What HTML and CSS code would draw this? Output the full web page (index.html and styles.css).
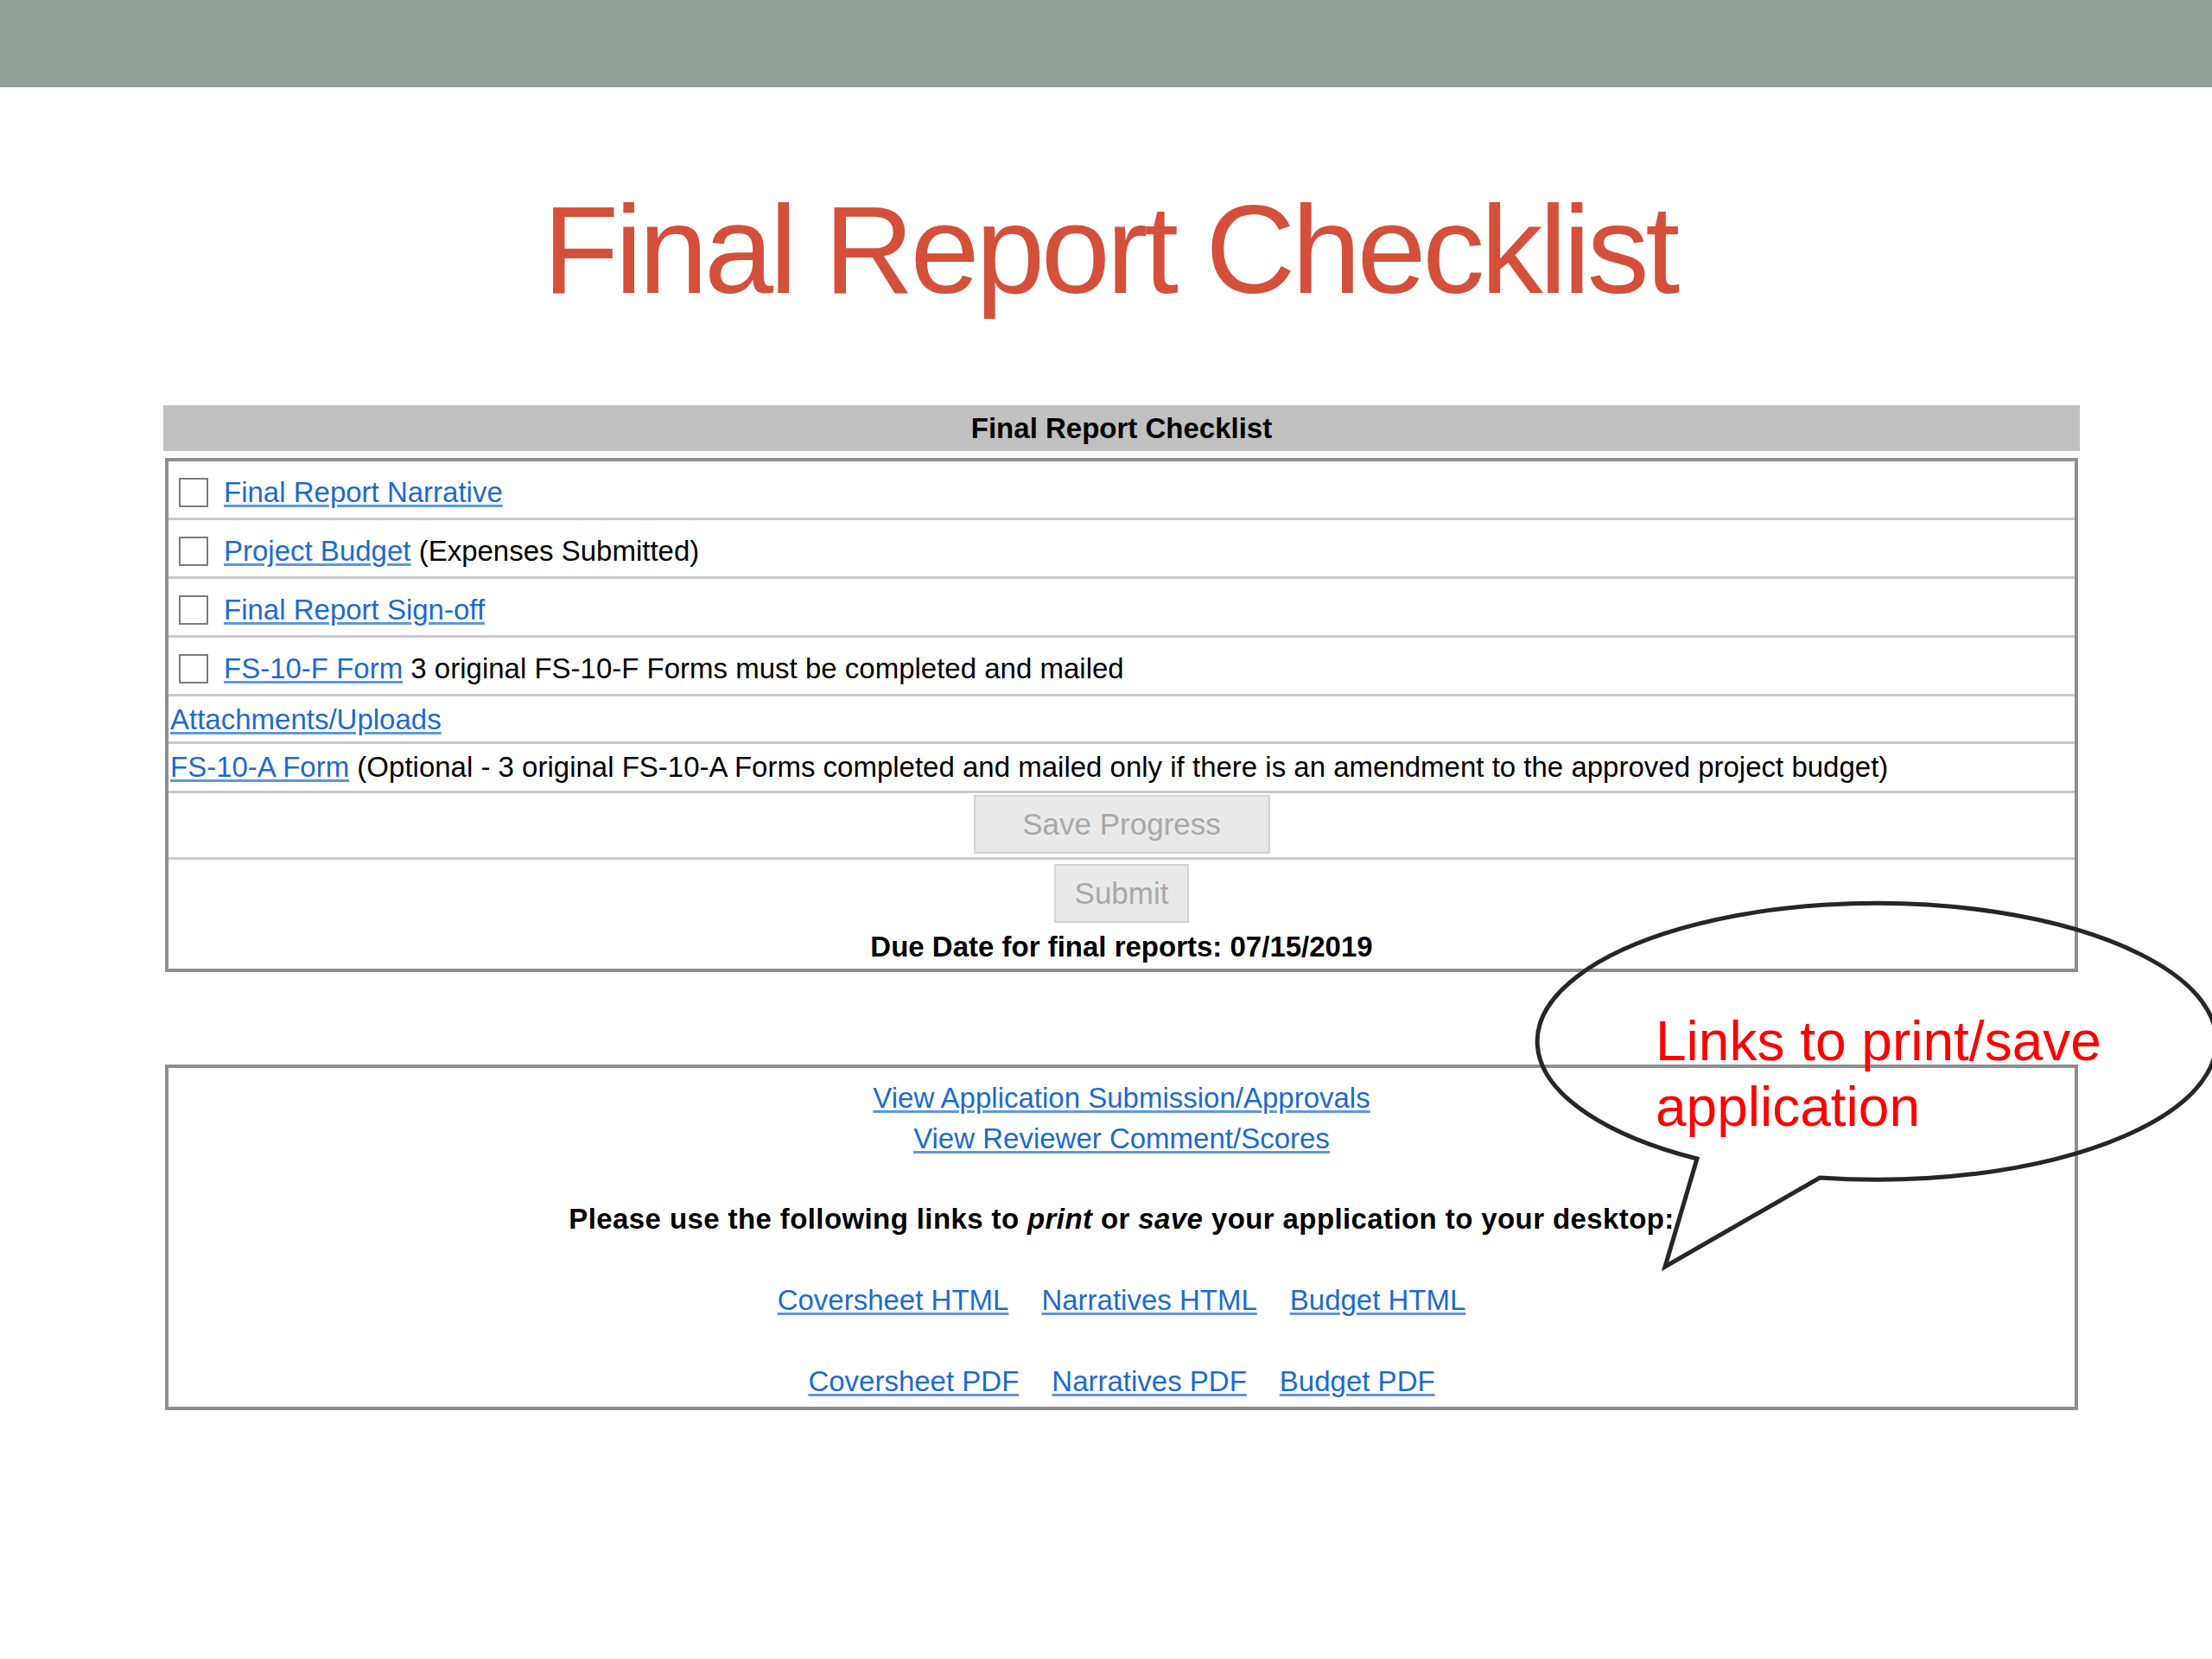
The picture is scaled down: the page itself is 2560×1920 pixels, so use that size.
FILE: index.html
```html
<!DOCTYPE html>
<html lang="en">
<head>
    <meta charset="UTF-8">
    <title>Final Report Checklist</title>
    <link rel="stylesheet" href="styles.css">
</head>
<body>
    <div class="slide">
        <div class="topbar"></div>
        <h1 class="title">Final Report Checklist</h1>

        <div class="panel">
            <div class="panel-head">Final Report Checklist</div>
            <div class="box checklist">
                <div class="row check-row">
                    <input type="checkbox" class="check">
                    <a href="#">Final Report Narrative</a>
                </div>
                <div class="row check-row">
                    <input type="checkbox" class="check">
                    <span><a href="#">Project Budget</a> (Expenses Submitted)</span>
                </div>
                <div class="row check-row">
                    <input type="checkbox" class="check">
                    <a href="#">Final Report Sign-off</a>
                </div>
                <div class="row check-row">
                    <input type="checkbox" class="check">
                    <span><a href="#">FS-10-F Form</a> 3 original FS-10-F Forms must be completed and mailed</span>
                </div>
                <div class="row plain-row row-attach">
                    <a href="#">Attachments/Uploads</a>
                </div>
                <div class="row plain-row row-optional">
                    <span><a href="#">FS-10-A Form</a> (Optional - 3 original FS-10-A Forms completed and mailed only if there is an amendment to the approved project budget)</span>
                </div>
                <div class="row button-row">
                    <button class="btn btn-save" disabled>Save Progress</button>
                </div>
                <div class="row submit-row">
                    <button class="btn btn-submit" disabled>Submit</button>
                    <div class="due">Due Date for final reports: 07/15/2019</div>
                </div>
            </div>

            <div class="box downloads">
                <div class="view-links">
                    <a href="#">View Application Submission/Approvals</a>
                    <a href="#">View Reviewer Comment/Scores</a>
                </div>
                <p class="note">Please use the following links to <i>print</i> or <i>save</i> your application to your desktop:</p>
                <div class="file-links">
                    <a href="#">Coversheet HTML</a>
                    <a href="#">Narratives HTML</a>
                    <a href="#">Budget HTML</a>
                </div>
                <div class="file-links">
                    <a href="#">Coversheet PDF</a>
                    <a href="#">Narratives PDF</a>
                    <a href="#">Budget PDF</a>
                </div>
            </div>
        </div>

        <svg class="bubble" width="800" height="450" viewBox="0 0 800 450">
            <path d="M204 311 L167 436 L346 333 A393 160 0 1 0 204 311 Z" fill="none" stroke="#262626" stroke-width="5" stroke-linejoin="miter"/>
        </svg>
        <div class="callout">Links to print/save<br>application</div>
    </div>
</body>
</html>
```

FILE: styles.css
```css
body {
    margin: 0;
    background: #FFFFFF;
    font-family: "Liberation Sans", Arial, sans-serif;
    color: #000;
}
.slide {
    position: relative;
    width: 2560px;
    height: 1920px;
    overflow: hidden;
}
.topbar {
    height: 101px;
    background: #939F98;
}
.title {
    margin: 117px 0 0 0;
    padding-left: 8px;
    font-size: 144px;
    line-height: 144px;
    font-weight: normal;
    letter-spacing: -4.4px;
    text-align: center;
    color: #D4503A;
}
.panel {
    width: 2218px;
    margin: 107px 0 0 189px;
    font-size: 33px;
}
.panel a {
    color: #1C6BD0;
    text-decoration-color: #5C97E0;
    text-underline-offset: 3px;
}
.panel-head {
    height: 53px;
    line-height: 53px;
    background: #C0C0C0;
    text-align: center;
    font-weight: bold;
}
.box {
    margin: 0 2px;
    border: 4px solid #8E8E8E;
    background: #FFF;
}
.checklist {
    margin-top: 8px;
}
.row {
    display: flex;
    align-items: center;
    border-top: 3px solid #C9C9C9;
    line-height: 38px;
}
.row:first-child {
    border-top: none;
}
.check-row {
    height: 59px;
    padding-top: 6px;
}
.check {
    appearance: none;
    -webkit-appearance: none;
    width: 34px;
    height: 34px;
    margin: 0 18px 0 12px;
    border: 2px solid #7C7C7C;
    background: #FFF;
    box-sizing: border-box;
}
.plain-row {
    padding-left: 2px;
}
.row-attach {
    height: 50px;
    padding-top: 2px;
}
.row-optional {
    height: 54px;
}
.button-row {
    justify-content: center;
    padding: 2px 0 4px;
}
.submit-row {
    flex-direction: column;
    padding: 5px 0 6px;
}
.btn {
    height: 68px;
    font-family: "Liberation Sans", Arial, sans-serif;
    font-size: 35px;
    color: #A8A8A8;
    background: #E9E9E9;
    border: 2px solid #D2D2D2;
    padding: 0;
}
.btn-save {
    width: 343px;
}
.btn-submit {
    width: 156px;
}
.due {
    margin-top: 9px;
    font-weight: bold;
}
.downloads {
    margin-top: 107px;
    padding: 11px 0 6px;
    text-align: center;
    line-height: 47px;
}
.view-links {
    display: flex;
    flex-direction: column;
    align-items: center;
}
.note {
    margin: 46px 0 0;
    font-weight: bold;
    letter-spacing: 0.4px;
}
.file-links {
    display: flex;
    justify-content: center;
    gap: 38px;
    margin-top: 47px;
}
.bubble {
    position: absolute;
    left: 1760px;
    top: 1030px;
}
.callout {
    position: absolute;
    left: 1916px;
    top: 1167px;
    font-size: 64px;
    line-height: 76px;
    color: #FF0000;
}
```
